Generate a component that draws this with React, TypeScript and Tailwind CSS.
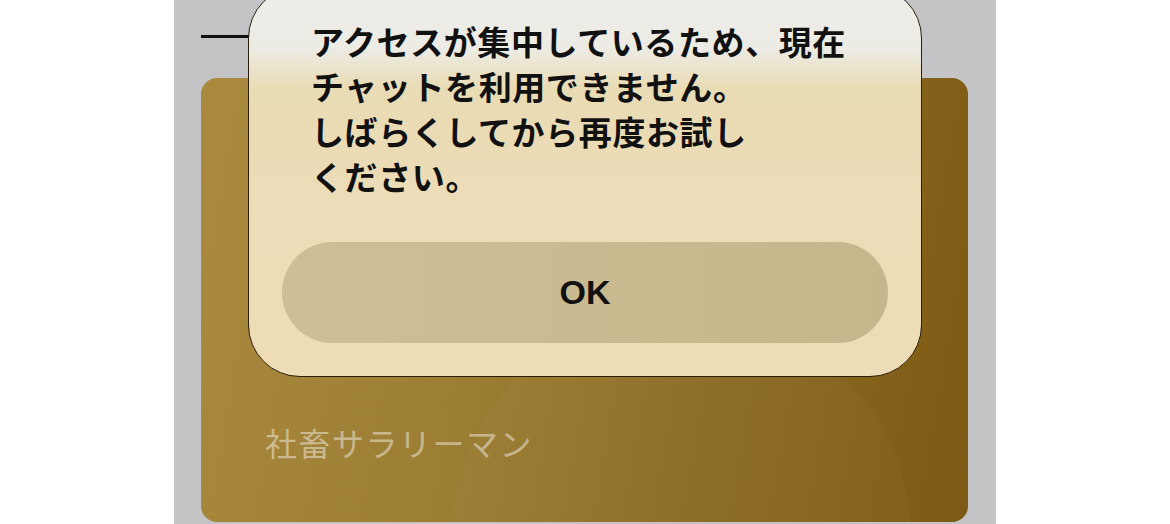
export default function App() {
  return (
    <div
      className="relative flex h-[524px] w-[1170px] overflow-hidden bg-white"
      style={{ fontFamily: '"Noto Sans CJK JP", "Noto Sans", sans-serif' }}
    >
      {/* Phone screen behind the alert */}
      <div className="ml-[174px] flex h-full w-[822px] flex-col bg-[#c4c4c6] pl-[27px] pr-[28px]">
        <div className="mt-[35px] h-[3px] w-[60px] bg-[#111]" />
        <div className="relative mb-[2px] mt-[40px] flex-1 overflow-hidden rounded-[16px] bg-[linear-gradient(100deg,#a98a3f_0%,#9c7e34_35%,#8a6a22_70%,#7d5a13_100%)] pl-[64px] pt-[344px]">
          <div className="pointer-events-none absolute left-[250px] top-[230px] h-[460px] w-[460px] rounded-full bg-white/[0.025]" />
          <p className="relative text-[32px] leading-[40px] tracking-[1.5px] text-white/45">社畜サラリーマン</p>
        </div>
      </div>

      {/* Alert */}
      <div className="absolute left-[248px] top-[-14px] flex h-[391px] w-[674px] flex-col rounded-[52px] border border-[#2a1f0c] bg-[linear-gradient(180deg,#efede8_0%,#ecebe4_16%,#e9dbb4_26%,#ecdcb7_55%,#eddcb5_100%)] px-[33px] pb-[33px] pt-[32px]">
        <p className="pl-[29px] text-[33px] font-bold leading-[45px] tracking-[0.6px] text-[#111]">
          アクセスが集中しているため、現在
          <br />
          チャットを利用できません。
          <br />
          しばらくしてから再度お試し
          <br />
          ください。
        </p>
        <button className="mt-auto flex h-[101px] w-full items-center justify-center rounded-full bg-[linear-gradient(90deg,#cebe96_0%,#cab98f_60%,#c7b68b_100%)] text-[34px] font-bold text-[#111]" style={{ fontFamily: '"Liberation Sans", Arial, sans-serif' }}>
          OK
        </button>
      </div>
    </div>
  );
}
